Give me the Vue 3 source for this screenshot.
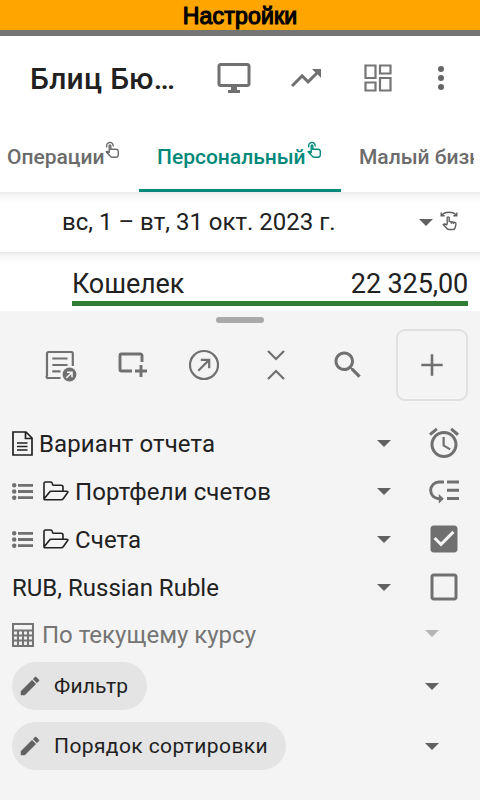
<script setup>
const tabs = [
  { label: 'Операции', cls: 'first', hand: true },
  { label: 'Персональный', cls: 'active', hand: true },
  { label: 'Малый бизнес', cls: 'last', hand: false },
]
const rows = [
  { label: 'Вариант отчета', icon: 'doc', action: 'alarm' },
  { label: 'Портфели счетов', icon: 'folder', action: 'order' },
  { label: 'Счета', icon: 'folder', action: 'checked' },
  { label: 'RUB, Russian Ruble', icon: '', action: 'unchecked' },
]
const chips = [
  { label: 'Фильтр', cls: 'short' },
  { label: 'Порядок сортировки', cls: 'long' },
]
</script>

<template>
  <div class="screen">
    <div class="banner">Настройки</div>
    <div class="status"></div>

    <header class="appbar">
      <h1 class="title">Блиц Бю…</h1>
      <svg class="ic" viewBox="0 0 24 24"><path d="M21 2H3c-1.1 0-2 .9-2 2v12c0 1.1.9 2 2 2h7v2H8v2h8v-2h-2v-2h7c1.1 0 2-.9 2-2V4c0-1.1-.9-2-2-2zm0 14H3V4h18v12z" /></svg>
      <svg class="ic" viewBox="0 0 24 24"><path d="M16 6l2.29 2.29-4.88 4.88-4-4L2 16.59 3.41 18l6-6 4 4 6.3-6.29L22 12V6z" /></svg>
      <svg class="ic dash" viewBox="0 0 36 36"><path d="M5.500 5.500h10v12.500h-10zM20 5.500h10.500v8h-10.500zM5.500 22.500h10v8h-10zM20 18h10.500v12.500h-10.500z" /></svg>
      <svg class="ic more" viewBox="0 0 24 24"><circle cx="12" cy="6" r="2" /><circle cx="12" cy="12" r="2" /><circle cx="12" cy="18" r="2" /></svg>
    </header>

    <nav class="tabs">
      <div v-for="t in tabs" :key="t.label" class="tab" :class="t.cls">
        <span>{{ t.label }}</span>
        <svg v-if="t.hand" class="hand" viewBox="0 0 14 18">
          <path d="M2 6.300A3.300 3.300 0 1 1 8.100 5.500M4.200 12V4.600q.8-1.200 1.600 0V8.200H11.300q2 .2 2 2v3.600q0 2.400-2.200 2.400H7.200Q5.800 16 4.900 14.800L1.200 10.800q1-.8 3 1" />
        </svg>
      </div>
    </nav>

    <section class="period">
      <span class="period-text">вс, 1 – вт, 31 окт. 2023 г.</span>
      <svg class="caret" viewBox="0 0 14 7"><path d="M0 0h14L7 7z" /></svg>
      <svg class="swipe" viewBox="0 0 18 20">
        <path d="M1.200 1.500v3.300h3.500M16.800 1.500v3.300h-3.500M1.500 4.400Q4 1.200 9 1.200t7.500 3.200M7.200 13.500V6.500q1-1.300 2 0V10.500l5.800 1q1 .3 1 1.500l-.8 3.500q-.5 2-2 2H9q-1.300 0-2-1L3.200 13.600q1-1.300 4 .6M11.300 11v1.800M13.400 11.400v1.600" />
      </svg>
    </section>

    <section class="wallet">
      <div class="wallet-line"><span>Кошелек</span><span>22 325,00</span></div>
    </section>

    <section class="sheet">
      <div class="handle"></div>
      <div class="tools">
        <svg class="ic" viewBox="0 0 36 36">
          <g class="st"><path d="M30.800 19V6.500a1.500 1.500 0 0 0-1.500-1.500H6.500A1.500 1.500 0 0 0 5 6.500v22A1.500 1.500 0 0 0 6.500 31H18.500" /><path d="M10.300 11.500H25.500M10.300 18H25.500M10.300 24.300H18.500" /></g>
          <circle cx="27.500" cy="27.500" r="6.900" /><path class="cut" d="M24.300 31l5-5M25 25.200h5v5" />
        </svg>
        <svg class="ic" viewBox="0 0 36 36"><path class="st thick" d="M18 24H7.500A1.500 1.500 0 0 1 6 22.500V8.500A1.500 1.500 0 0 1 7.500 7h19A1.500 1.500 0 0 1 28 8.500V15M21 24h12M27 18v12" /></svg>
        <svg class="ic" viewBox="0 0 36 36"><g class="st"><circle cx="18" cy="18" r="14" /><path d="M12.300 23.700L23 13M14.800 12.800h8.400V21.200" /></g></svg>
        <svg class="ic" viewBox="0 0 36 36"><path class="st" d="M10 4l8 8 8-8M10 32l8-8 8 8" /></svg>
        <svg class="ic" viewBox="0 0 24 24"><path d="M15.500 14h-.79l-.28-.27C15.410 12.590 16 11.110 16 9.500 16 5.910 13.090 3 9.500 3S3 5.910 3 9.500 5.910 16 9.500 16c1.610 0 3.090-.59 4.230-1.570l.27.28v.79l5 4.990L20.490 19l-4.990-5zm-6 0C7.010 14 5 11.990 5 9.500S7.010 5 9.500 5 14 7.010 14 9.500 11.990 14 9.500 14z" /></svg>
        <button class="add"><svg viewBox="0 0 22 22"><path d="M11 0.300v21.400M0.300 11h21.400" /></svg></button>
      </div>

      <div v-for="r in rows" :key="r.label" class="row" :class="{ plain: !r.icon }">
        <svg v-if="r.icon === 'doc'" class="doc" viewBox="0 0 21 25"><path d="M1 1h13l6 6v17h-19zM13.500 1v6.500h6.500M5 12h10.500M5 15.500h10.500M5 19h10.500" /></svg>
        <template v-if="r.icon === 'folder'">
          <svg class="list" viewBox="0 0 21 17"><g><circle cx="2.200" cy="2.300" r="2.200" /><circle cx="2.200" cy="8.500" r="2.200" /><circle cx="2.200" cy="14.700" r="2.200" /></g><path d="M6 .9h15v2.800H6zM6 7.100h15v2.800H6zM6 13.300h15v2.800H6z" /></svg>
          <svg class="folder" viewBox="0 0 26 20"><path d="M1 18V2.500Q1 1 2.500 1h5.200q1.300 0 1.600 1.500l.2.800q.2.900 1.300.9h7.200q2 0 2 2v3.600M1 18l5.600-7q.5-.8 1.500-.8h15.400q2.200 0 1 1.600l-4.300 6q-.7 1-2 1H2.200Q1 18.800 1 18z" /></svg>
        </template>
        <span class="label">{{ r.label }}</span>
        <svg class="caret" viewBox="0 0 14 7"><path d="M0 0h14L7 7z" /></svg>
        <svg v-if="r.action === 'alarm'" class="ic act" viewBox="0 0 24 24"><path d="M22 5.720l-4.600-3.860-1.290 1.530 4.600 3.860L22 5.720zM7.880 3.390L6.600 1.860 2 5.710l1.290 1.530 4.590-3.850zM12.500 8H11v6l4.750 2.850.75-1.230-4-2.370V8zM12 4c-4.970 0-9 4.030-9 9s4.020 9 9 9c4.970 0 9-4.030 9-9s-4.030-9-9-9zm0 16c-3.870 0-7-3.130-7-7s3.130-7 7-7 7 3.130 7 7-3.130 7-7 7z" /></svg>
        <svg v-if="r.action === 'order'" class="ic act" viewBox="0 -1.5 36 36"><path d="M21 6h12v3H21zM21 14.200h12v3H21zM21 22.400h12v3H21zM12.800 19.500l5 4.700-5 4.700z" /><path class="st thick" d="M18 7.500h-5a8.350 8.350 0 0 0 0 16.700h1.500" /></svg>
        <svg v-if="r.action === 'checked'" class="ic act" viewBox="0 0 24 24"><path d="M19 3H5c-1.110 0-2 .9-2 2v14c0 1.100.89 2 2 2h14c1.110 0 2-.9 2-2V5c0-1.100-.89-2-2-2zm-9 14l-5-5 1.410-1.410L10 14.170l7.590-7.590L19 8l-9 9z" /></svg>
        <svg v-if="r.action === 'unchecked'" class="ic act" viewBox="0 0 24 24"><path d="M19 5v14H5V5h14m0-2H5c-1.100 0-2 .9-2 2v14c0 1.100.9 2 2 2h14c1.100 0 2-.9 2-2V5c0-1.100-.9-2-2-2z" /></svg>
      </div>

      <div class="row rate">
        <svg class="calc" viewBox="0 0 22 24"><path d="M1 1h20v22H1zM1 7.500h20M1 12.500h20M1 17.500h20M6 7.500V23M11 7.500V23M16 7.500V23" /></svg>
        <span class="label">По текущему курсу</span>
        <svg class="caret" viewBox="0 0 14 7"><path d="M0 0h14L7 7z" /></svg>
      </div>

      <div v-for="c in chips" :key="c.label" class="chip-row">
        <div class="chip" :class="c.cls">
          <svg viewBox="0 0 24 24"><path d="M3 17.250V21h3.750L17.810 9.940l-3.750-3.750L3 17.250zM20.710 7.040c.39-.39.39-1.020 0-1.410l-2.340-2.340c-.39-.39-1.020-.39-1.410 0l-1.830 1.830 3.750 3.750 1.830-1.830z" /></svg>
          <span>{{ c.label }}</span>
        </div>
        <svg class="caret" viewBox="0 0 14 7"><path d="M0 0h14L7 7z" /></svg>
      </div>
    </section>
  </div>
</template>

<style>
body { margin: 0; background: #fff; }
</style>

<style scoped>
.screen { width: 480px; height: 800px; overflow: hidden; display: flex; flex-direction: column; background: #fff; font-family: Roboto, sans-serif; color: #212121; white-space: nowrap; }
.screen * { box-sizing: border-box; }
svg { flex: none; display: block; fill: #707070; }
.banner { height: 30px; flex: none; background: #ffa500; color: #000; font: 23px/32px "Liberation Sans", sans-serif; letter-spacing: .2px; text-align: center; -webkit-text-stroke: 1.2px #000; }
.status { height: 6px; flex: none; background: #757575; }
.ic { width: 36px; height: 36px; }
.appbar { height: 84px; flex: none; display: flex; align-items: center; gap: 36px; padding-left: 30px; }
.title { margin: 1px 5px 0 0; width: 145px; font-size: 30px; font-weight: 500; line-height: 36px; letter-spacing: .3px; }
.dash { fill: none; stroke: #757575; stroke-width: 2.200; }
.more { margin-left: -9px; fill: #666; }
.tabs { height: 72px; flex: none; display: flex; width: 474px; overflow: hidden; font-size: 21px; font-weight: 500; color: #6b6b6b; }
.tab { display: flex; align-items: center; flex: none; padding-top: 2px; }
.first { width: 139px; padding-left: 7px; }
.active { width: 202px; padding-left: 18px; padding-top: 5px; color: #00897b; border-bottom: 3px solid #00897b; }
.last { padding-left: 18px; }
.hand { width: 14px; height: 18px; margin: -14px 0 0 1px; fill: none; stroke: #6b6b6b; stroke-width: 1.400; }
.active .hand { stroke: #00897b; }
.period { height: 60px; flex: none; display: flex; align-items: center; padding-left: 62px; font-size: 24px; background: linear-gradient(#ececec, #f7f7f7 4px, #fff 11px); }
.period-text { width: 357px; }
.caret { width: 14px; height: 7px; fill: #616161; }
.swipe { width: 18px; height: 20px; margin: -2px 0 0 7px; fill: none; stroke: #616161; stroke-width: 1.400; }
.wallet { height: 59px; flex: none; padding: 14px 12px 0 72px; background: linear-gradient(#e8e8e8, #f7f7f7 4px, #fff 11px); }
.wallet-line { height: 40px; display: flex; justify-content: space-between; font-size: 27px; line-height: 36px; letter-spacing: -.12px; border-bottom: 5px solid #2e7d32; }
.sheet { height: 489px; flex: none; background: #f4f4f4; padding: 6px 12px 0; }
.handle { width: 48px; height: 6px; border-radius: 3px; background: #aaa; margin: 0 auto; }
.tools { height: 96px; display: flex; gap: 36px; align-items: center; padding: 0 0 12px 30px; }
.st { fill: none; stroke: #707070; stroke-width: 2.200; }
.thick { stroke-width: 2.900; }
.cut { fill: none; stroke: #f4f4f4; stroke-width: 1.600; }
.add { width: 72px; height: 72px; flex: none; margin-left: -6px; border: 2px solid #e0e0e0; border-radius: 9px; background: #f4f4f4; display: flex; align-items: center; justify-content: center; padding: 0; }
.add svg { width: 22px; height: 22px; stroke: #707070; stroke-width: 2.600; }
.row { height: 48px; display: flex; align-items: center; font-size: 24px; }
.row .caret { margin-top: 1px; }
.label { flex: 1; padding-top: 1px; letter-spacing: .1px; }
.plain .label { letter-spacing: 0; }
.act { margin: 0 6px 0 35px; }
.doc { width: 21px; height: 25px; margin: 0 6px 0 0; fill: none; stroke: #212121; stroke-width: 1.700; }
.list { width: 21px; height: 17px; }
.folder { width: 26px; height: 20px; margin: -1px 6px 0 10px; fill: none; stroke: #212121; stroke-width: 1.600; }
.rate { height: 45px; color: #757575; padding: 2px 29px 0 0; }
.rate .caret { fill: #b5b5b5; margin-top: -3px; }
.rate .label { padding-top: 0; letter-spacing: 0; }
.calc { width: 22px; height: 24px; margin-right: 8px; fill: none; stroke: #757575; stroke-width: 2.100; }
.chip-row { height: 60px; display: flex; align-items: center; justify-content: space-between; padding-right: 29px; }
.chip { height: 48px; display: flex; align-items: center; gap: 12px; padding-left: 6px; border-radius: 24px; background: #e4e4e4; font-size: 21px; letter-spacing: .4px; }
.chip svg { width: 24px; height: 24px; fill: #616161; stroke: #616161; stroke-width: .5; }
.short { width: 135px; letter-spacing: .2px; }
.long { width: 274px; }
</style>
